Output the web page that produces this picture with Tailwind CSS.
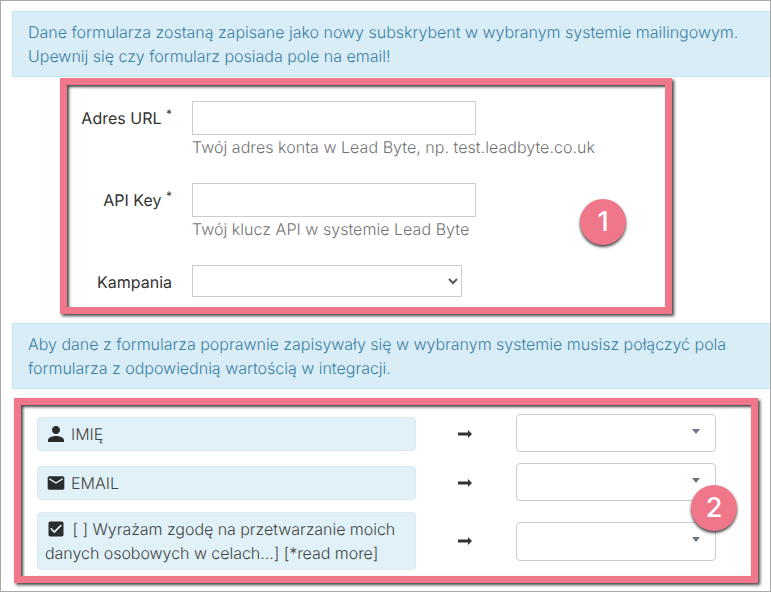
<!DOCTYPE html>
<html lang="pl">
<head>
<meta charset="utf-8">
<script src="https://cdn.jsdelivr.net/npm/@tailwindcss/browser@4"></script>
</head>
<body class="bg-white">
<div class="relative w-[771px] h-[592px] overflow-hidden border border-[#a9a9a9] pt-[10px] pl-[11px] font-['Inter','Liberation_Sans',sans-serif] font-light text-[16px] leading-6 text-[#333] [text-rendering:geometricPrecision]">

  <div class="border border-r-0 border-[#bce8f1] bg-[#d9edf7] text-[#3b80a3] pl-[15px] pt-[8px] h-[66px] tracking-[-0.01px]">
    <p>Dane formularza zostaną zapisane jako nowy subskrybent w wybranym systemie mailingowym.</p>
    <p>Upewnij się czy formularz posiada pole na email!</p>
  </div>

  <form class="pt-[24px] h-[246px]">
    <div class="flex h-[82px]">
      <label class="w-[160px] shrink-0 text-right pt-[5px] font-normal">Adres URL <sup class="text-[12px]">*</sup></label>
      <div class="ml-[20px]">
        <input type="text" aria-label="Adres URL" class="block w-[284px] h-[34px] border border-[#ccc] bg-white">
        <p class="text-[#737373] tracking-[0.04px]">Twój adres konta w Lead Byte, np. test.leadbyte.co.uk</p>
      </div>
    </div>
    <div class="flex h-[82px]">
      <label class="w-[160px] shrink-0 text-right pt-[5px] font-normal">API Key <sup class="text-[12px]">*</sup></label>
      <div class="ml-[20px]">
        <input type="text" aria-label="API Key" class="block w-[284px] h-[34px] border border-[#ccc] bg-white">
        <p class="text-[#737373] tracking-[0.04px]">Twój klucz API w systemie Lead Byte</p>
      </div>
    </div>
    <div class="flex">
      <label class="w-[160px] shrink-0 text-right pt-[5px] font-normal">Kampania</label>
      <select aria-label="Kampania" class="ml-[20px] w-[270px] h-[32px] border border-[#ccc] bg-white text-[#555]"></select>
    </div>
  </form>

  <div class="border border-r-0 border-[#bce8f1] bg-[#d9edf7] text-[#3b80a3] pl-[15px] pt-[8px] h-[66px] tracking-[-0.01px]">
    <p>Aby dane z formularza poprawnie zapisywały się w wybranym systemie musisz połączyć pola</p>
    <p>formularza z odpowiednią wartością w integracji.</p>
  </div>

  <div class="pl-[25px] pt-[25px]">
    <div class="flex items-start h-[38px]">
      <div class="flex items-center w-[379px] h-[34px] mt-[3px] px-[8px] rounded bg-[#e0f1f8] border border-[#dde9ee] text-[#444]">
        <svg class="w-[24px] h-[24px] -ml-[2px] mr-[3px] fill-[#2b2b2b]" viewBox="0 0 24 24"><path d="M12 12c2.210 0 4-1.790 4-4s-1.790-4-4-4-4 1.790-4 4 1.790 4 4 4zm0 2c-2.670 0-8 1.340-8 4v2h16v-2c0-2.660-5.330-4-8-4z"/></svg>
        <span>IMIĘ</span>
      </div>
      <svg class="w-[14px] h-[10px] ml-[42px] mt-[15px] fill-[#333]" viewBox="0 0 14 10"><path d="M0 3.500h10V1l4 4-4 4V6.500H0z"/></svg>
      <div class="relative w-[200px] h-[38px] ml-[44px] rounded border border-[#ccc] bg-white">
        <span class="absolute right-[15px] top-[14px] w-0 h-0 border-x-[4.500px] border-x-transparent border-t-[5px] border-t-[#6b7280]"></span>
      </div>
    </div>
    <div class="flex items-start h-[38px] mt-[11px]">
      <div class="flex items-center w-[379px] h-[34px] mt-[3px] px-[8px] rounded bg-[#e0f1f8] border border-[#dde9ee] text-[#444]">
        <svg class="w-[20px] h-[20px] mr-[5px] fill-[#2b2b2b]" viewBox="0 0 24 24"><path d="M20 4H4c-1.100 0-2 .9-2 2v12c0 1.100.9 2 2 2h16c1.100 0 2-.9 2-2V6c0-1.100-.9-2-2-2zm0 4-8 5-8-5V6l8 5 8-5v2z"/></svg>
        <span>EMAIL</span>
      </div>
      <svg class="w-[14px] h-[10px] ml-[42px] mt-[15px] fill-[#333]" viewBox="0 0 14 10"><path d="M0 3.500h10V1l4 4-4 4V6.500H0z"/></svg>
      <div class="relative w-[200px] h-[38px] ml-[44px] rounded border border-[#ccc] bg-white">
        <span class="absolute right-[15px] top-[14px] w-0 h-0 border-x-[4.500px] border-x-transparent border-t-[5px] border-t-[#6b7280]"></span>
      </div>
    </div>
    <div class="flex items-center h-[58px] mt-[11px]">
      <div class="w-[379px] h-[58px] px-[7px] pt-[4px] rounded bg-[#e0f1f8] border border-[#dde9ee] text-[#444] tracking-[-0.04px]">
        <svg class="inline-block align-[-4px] w-[20px] h-[20px] ml-[1px] mr-[2px] fill-[#2b2b2b]" viewBox="0 0 24 24"><path d="M19 3H5c-1.110 0-2 .9-2 2v14c0 1.100.89 2 2 2h14c1.110 0 2-.9 2-2V5c0-1.100-.89-2-2-2zm-9 14-5-5 1.410-1.410L10 14.170l7.590-7.590L19 8l-9 9z"/></svg>
        <span>[ ] Wyrażam zgodę na przetwarzanie moich danych osobowych w celach...] [*read more]</span>
      </div>
      <svg class="w-[14px] h-[10px] ml-[42px] fill-[#333]" viewBox="0 0 14 10"><path d="M0 3.500h10V1l4 4-4 4V6.500H0z"/></svg>
      <div class="relative w-[200px] h-[39px] ml-[44px] rounded border border-[#ccc] bg-white">
        <span class="absolute right-[15px] top-[14px] w-0 h-0 border-x-[4.500px] border-x-transparent border-t-[5px] border-t-[#6b7280]"></span>
      </div>
    </div>
  </div>

  <div class="absolute left-[59px] top-[77px] w-[612px] h-[236px] border-[7px] border-[#f0768a] shadow-[2px_2px_3px_#444,inset_2px_2px_3px_#444]"></div>
  <div class="absolute left-[13px] top-[397px] w-[744px] h-[185px] border-[7px] border-[#f0768a] shadow-[2px_2px_3px_#444,inset_2px_2px_3px_#444]"></div>
  <div class="absolute left-[579px] top-[198px] w-[46px] h-[46px] rounded-full bg-[#f0768a] text-white text-[27px] font-medium flex items-center justify-center shadow-[0_2px_3px_#444]">1</div>
  <div class="absolute left-[690px] top-[484px] w-[46px] h-[46px] rounded-full bg-[#f0768a] text-white text-[27px] font-medium flex items-center justify-center shadow-[0_2px_3px_#444]">2</div>
</div>
</body>
</html>
